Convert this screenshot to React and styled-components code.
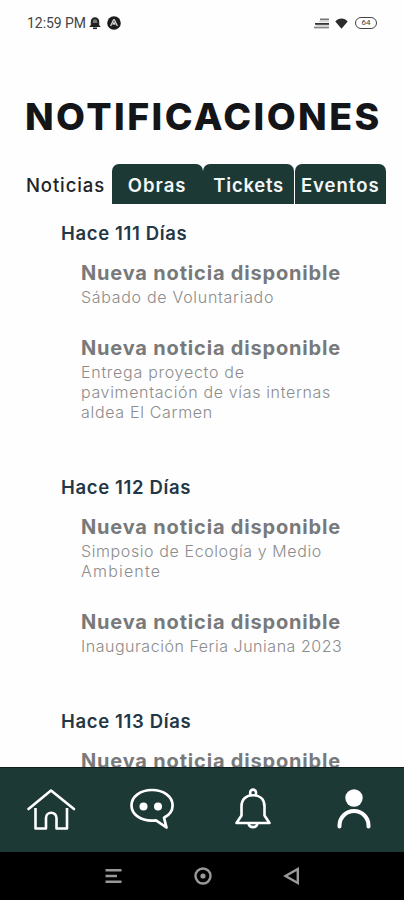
import React from 'react';
import styled, { createGlobalStyle } from 'styled-components';

const groups = [
  {
    label: 'Hace 111 Días',
    items: [
      [{ text: 'Sábado de Voluntariado', spacing: 0.7 }],
      [
        { text: 'Entrega proyecto de', spacing: 0.72 },
        { text: 'pavimentación de vías internas', spacing: 0.65 },
        { text: 'aldea El Carmen', spacing: 0.68 },
      ],
    ],
  },
  {
    label: 'Hace 112 Días',
    items: [
      [
        { text: 'Simposio de Ecología y Medio', spacing: 0.6 },
        { text: 'Ambiente', spacing: 1.2 },
      ],
      [{ text: 'Inauguración Feria Juniana 2023', spacing: 0.53 }],
    ],
  },
  {
    label: 'Hace 113 Días',
    items: [[]],
  },
];

const tabs = [
  { label: 'Noticias', spacing: 0.9 },
  { label: 'Obras', spacing: 1 },
  { label: 'Tickets', spacing: 0.75 },
  { label: 'Eventos', spacing: 1 },
];

/**
 * Android status bar: clock, app notifications, signal, wifi and battery
 */
const StatusBar = () => (
  <StatusRow>
    <StatusSide>
      <Clock>12:59 PM</Clock>
      <svg width="12" height="14" viewBox="0 0 12 14">
        <path d="M1.8 9V5.4a4.2 4.2 0 0 1 8.4 0V9l1.6 2H.2z" fill="#222" />
        <path d="M3.8 7V5.4a2.2 2.2 0 0 1 4.4 0V7z" fill="#777" />
        <path d="M4 12.3h4" stroke="#222" strokeWidth="1.6" />
      </svg>
      <ExpoIcon width="14" height="14" viewBox="0 0 14 14">
        <circle cx="7" cy="7" r="6.8" fill="#1c1c1c" />
        <path d="M3.6 10 6.3 4.2q.7-1 1.4 0L10.4 10M5.8 8.8 7 6.6l1.2 2.2" fill="none" stroke="#ddd" strokeWidth="1.2" />
      </ExpoIcon>
    </StatusSide>
    <StatusSide>
      <svg width="15" height="11" viewBox="0 0 15 11">
        <path d="M6 1.4h9" stroke="#777" strokeWidth="1.8" />
        <path d="M1 5.9h14" stroke="#333" strokeWidth="1.8" />
        <path d="M0 9.5h15" stroke="#888" strokeWidth="1.8" />
        <path d="M5 3.7h10M2 7.7h13" stroke="#ccc" strokeWidth="1" />
      </svg>
      <WifiIcon width="13" height="11" viewBox="0 0 13 11">
        <path d="M.3 3.6Q2.8.4 6.5.4t6.2 3.2L6.5 10.7z" fill="#2c2c2c" />
      </WifiIcon>
      <Battery>64</Battery>
    </StatusSide>
  </StatusRow>
);

const HomeIcon = () => (
  <svg width="50" height="44" viewBox="0 0 50 44" fill="none" stroke="#fff" strokeWidth="2.6">
    <path d="M2.5 22 25 3.5l23 18.5" strokeLinecap="round" strokeLinejoin="round" />
    <path d="M9.5 21v20.5H20V31a5 5 0 0 1 10.5 0v10.5H41V21" strokeLinejoin="round" />
  </svg>
);

const ChatIcon = () => (
  <svg width="44" height="42" viewBox="0 0 44 42">
    <path
      d="M34 29.8C39.5 27 42.6 22.5 42.6 17.5 42.6 8.5 33.5 2 22 2S1.5 8.5 1.5 17.5 10.5 32.6 22 32.6q2 0 4-.3l10.5 7.2z"
      fill="none"
      stroke="#fff"
      strokeWidth="2.7"
      strokeLinejoin="round"
    />
    <circle cx="13.5" cy="18.5" r="4" fill="#fff" />
    <circle cx="28" cy="18.5" r="4" fill="#fff" />
  </svg>
);

const BellIcon = () => (
  <svg width="36" height="42" viewBox="0 0 36 42" fill="none" stroke="#fff" strokeWidth="2.6" strokeLinejoin="round">
    <path d="M15.2 7V4.5a2.9 2.9 0 0 1 5.8 0V7" />
    <path d="M6.5 27.5V18.5C6.5 11 11.5 7.2 18 7.2s11.5 3.8 11.5 11.3v9l5 7.5h-33z" />
    <path d="M13.5 35.5a4.6 4.6 0 0 0 9 0" />
  </svg>
);

const UserIcon = () => (
  <svg width="36" height="42" viewBox="0 0 36 42">
    <circle cx="18" cy="10" r="8.7" fill="#fff" />
    <path d="M3.5 38.5V37.5a14.5 14.5 0 0 1 29 0v1" fill="none" stroke="#fff" strokeWidth="4" strokeLinecap="round" />
  </svg>
);

const App = () => (
  <Screen>
    <GlobalStyle />
    <StatusBar />
    <Title>NOTIFICACIONES</Title>
    <Tabs>
      {tabs.map((tab, index) => (
        <Tab key={tab.label} $active={index === 0} $spacing={tab.spacing}>
          {tab.label}
        </Tab>
      ))}
    </Tabs>
    <List>
      {groups.map((group) => (
        <Group key={group.label}>
          <GroupLabel>{group.label}</GroupLabel>
          {group.items.map((lines, index) => (
            <Item key={index}>
              <ItemTitle>Nueva noticia disponible</ItemTitle>
              {lines.map((line) => (
                <ItemLine key={line.text} $spacing={line.spacing}>
                  {line.text}
                </ItemLine>
              ))}
            </Item>
          ))}
        </Group>
      ))}
    </List>
    <BottomNav>
      <NavButton><HomeIcon /></NavButton>
      <NavButton><ChatIcon /></NavButton>
      <NavButton><BellIcon /></NavButton>
      <NavButton><UserIcon /></NavButton>
    </BottomNav>
    <SystemBar>
      <svg width="17" height="16" viewBox="0 0 17 16" stroke="#999" strokeWidth="2.6">
        <path d="M.5 2.3h16M.5 8h11.5M.5 13.7h16" />
      </svg>
      <svg width="18" height="18" viewBox="0 0 18 18">
        <circle cx="9" cy="9" r="7.5" fill="none" stroke="#999" strokeWidth="2.4" />
        <circle cx="9" cy="9" r="2.6" fill="#999" />
      </svg>
      <svg width="17" height="18" viewBox="0 0 17 18">
        <path d="M14.8 2v14L2.5 9z" fill="none" stroke="#999" strokeWidth="2.4" />
      </svg>
    </SystemBar>
  </Screen>
);

export default App;

const GlobalStyle = createGlobalStyle`
  * {
    box-sizing: border-box;
  }
  body {
    margin: 0;
    background: #fefefe;
  }
`;

const Screen = styled.div`
  display: flex;
  flex-direction: column;
  width: 404px;
  height: 900px;
  overflow: hidden;
  background: #fefefe;
  font-family: Inter, 'Liberation Sans', sans-serif;
`;

const StatusRow = styled.header`
  display: flex;
  justify-content: space-between;
  align-items: center;
  flex: none;
  height: 46px;
  padding: 0 27px;
`;

const StatusSide = styled.div`
  display: flex;
  align-items: center;
`;

const Clock = styled.span`
  margin-right: 3px;
  font-family: Roboto, sans-serif;
  font-size: 14px;
  letter-spacing: -0.05px;
  color: #444;
`;

const ExpoIcon = styled.svg`
  margin-left: 6px;
`;

const WifiIcon = styled.svg`
  margin: 0 7px 0 6px;
`;

const Battery = styled.span`
  width: 22px;
  height: 12px;
  border: 1.5px solid #444;
  border-radius: 6px;
  font-family: Roboto, sans-serif;
  font-size: 8px;
  line-height: 9px;
  text-align: center;
  color: #444;
`;

const Title = styled.h1`
  flex: none;
  margin: 47px 0 0 25px;
  font-size: 37.5px;
  line-height: 48px;
  font-weight: 800;
  letter-spacing: 2.4px;
  white-space: nowrap;
  color: #141518;
`;

const Tabs = styled.nav`
  display: grid;
  grid-template-columns: 91px 91px 91px 91px;
  column-gap: 0.6px;
  flex: none;
  height: 40px;
  margin: 23px 0 0 20px;
`;

const Tab = styled.div`
  display: flex;
  align-items: center;
  justify-content: center;
  padding-top: 2px;
  border-radius: 7px 7px 0 0;
  background: ${({ $active }) => ($active ? 'transparent' : '#1d3936')};
  color: ${({ $active }) => ($active ? '#222326' : '#f4f7f7')};
  font-size: 18.5px;
  font-weight: ${({ $active }) => ($active ? 500 : 600)};
  letter-spacing: ${({ $spacing }) => $spacing}px;
`;

const List = styled.main`
  flex: 1;
  min-height: 0;
  overflow: hidden;
  padding: 17px 0 0 61px;
`;

const Group = styled.section`
  margin-bottom: 24px;
`;

const GroupLabel = styled.h2`
  margin: 0 0 16px;
  font-size: 18.5px;
  line-height: 24px;
  font-weight: 600;
  letter-spacing: 0.65px;
  color: #233746;
`;

const Item = styled.article`
  padding: 0 0 29px 20px;
  white-space: nowrap;
`;

const ItemTitle = styled.h3`
  margin: 0 0 2px;
  font-size: 20px;
  line-height: 24px;
  font-weight: 700;
  letter-spacing: 0.82px;
  color: #77797a;
`;

const ItemLine = styled.p`
  margin: 0;
  font-size: 16px;
  line-height: 20px;
  font-weight: 300;
  letter-spacing: ${({ $spacing }) => $spacing}px;
  color: #8c8c8c;
`;

const BottomNav = styled.footer`
  display: grid;
  grid-template-columns: repeat(4, 1fr);
  flex: none;
  height: 85px;
  padding-bottom: 2px;
  border-top: 1px solid #0d201e;
  background: #1d3936;
`;

const NavButton = styled.div`
  display: flex;
  align-items: center;
  justify-content: center;
`;

const SystemBar = styled.div`
  display: flex;
  align-items: center;
  justify-content: space-between;
  flex: none;
  height: 48px;
  padding: 0 104px 0 105px;
  background: #000;
`;
